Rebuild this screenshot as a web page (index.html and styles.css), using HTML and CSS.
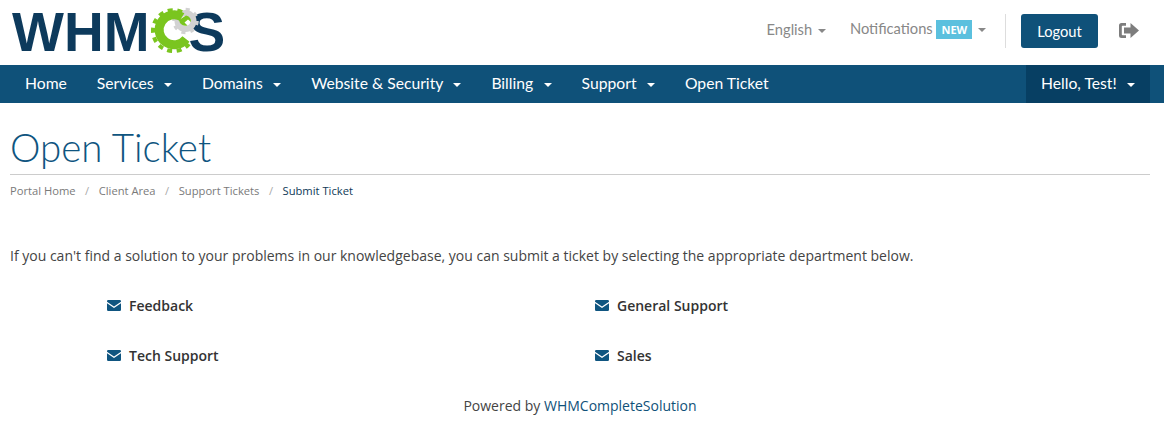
FILE: index.html
```html
<!DOCTYPE html>
<html lang="en">
<head>
    <meta charset="UTF-8">
    <meta name="viewport" content="width=device-width, initial-scale=1.0">
    <title>Open Ticket</title>
    <link rel="stylesheet" href="styles.css">
</head>
<body>
    <header class="top-bar">
        <a class="logo" href="#">
            <span class="logo-text">WHM</span>
            <svg class="logo-gears" viewBox="0 0 50 50" width="50" height="50">
                <g fill="none">
                    <circle cx="36.500" cy="15" r="8" stroke="#d2d2d2" stroke-width="6"/>
                    <circle cx="36.500" cy="15" r="11.500" stroke="#d2d2d2" stroke-width="3.500" stroke-dasharray="4 5"/>
                    <path d="M33 11A15 15 0 1 0 37 33" stroke="#7ac51f" stroke-width="9"/>
                    <path d="M33 6A20.500 20.500 0 1 0 40 38" stroke="#7ac51f" stroke-width="4" stroke-dasharray="5 4.500"/>
                </g>
                <path d="M30 14a6.500 6.500 0 0 0 8.500 5.500l-3-3 3.500-3 3 2.500a6.500 6.500 0 0 0-5-6.500z" fill="#7ac51f"/>
            </svg>
            <span class="logo-text">S</span>
        </a>
        <div class="top-actions">
            <a class="top-link" href="#">English <span class="caret"></span></a>
            <a class="top-link" href="#">Notifications <span class="badge">NEW</span> <span class="caret"></span></a>
            <div class="divider"></div>
            <a class="logout-btn" href="#">Logout</a>
            <svg class="logout-icon" viewBox="0 0 22 18" width="22" height="18">
                <path d="M8 1H3.500A2.500 2.500 0 0 0 1 3.500v10A2.500 2.500 0 0 0 3.500 16H8v-2.800H4.500a.7.7 0 0 1-.7-.7V4.500a.7.7 0 0 1 .7-.7H8z" fill="#7d7d7d"/>
                <path d="M6 5.500h6.500V1L21 8.500 12.500 16v-4.500H6z" fill="#7d7d7d"/>
            </svg>
        </div>
    </header>

    <nav class="main-nav">
        <ul class="nav-list">
            <li><a href="#">Home</a></li>
            <li><a href="#">Services <span class="caret"></span></a></li>
            <li><a href="#">Domains <span class="caret"></span></a></li>
            <li><a href="#">Website &amp; Security <span class="caret"></span></a></li>
            <li><a href="#">Billing <span class="caret"></span></a></li>
            <li><a href="#">Support <span class="caret"></span></a></li>
            <li><a href="#">Open Ticket</a></li>
        </ul>
        <a class="account-link" href="#">Hello, Test! <span class="caret"></span></a>
    </nav>

    <main class="content">
        <h1 class="page-title">Open Ticket</h1>
        <ol class="breadcrumb">
            <li><a href="#">Portal Home</a></li>
            <li><a href="#">Client Area</a></li>
            <li><a href="#">Support Tickets</a></li>
            <li class="active">Submit Ticket</li>
        </ol>

        <p class="intro">If you can't find a solution to your problems in our knowledgebase, you can submit a ticket by selecting the appropriate department below.</p>

        <div class="departments">
            <a class="department" href="#"><svg class="envelope" viewBox="0 0 14 11" width="14" height="11"><path d="M1.200 0h11.600A1.200 1.200 0 0 1 14 1.200v.5L7 6.400 0 1.700v-.5A1.200 1.200 0 0 1 1.200 0zM0 3.200l7 4.700 7-4.700v6.600A1.200 1.200 0 0 1 12.800 11H1.200A1.200 1.200 0 0 1 0 9.800z"/></svg>Feedback</a>
            <a class="department" href="#"><svg class="envelope" viewBox="0 0 14 11" width="14" height="11"><path d="M1.200 0h11.600A1.200 1.200 0 0 1 14 1.200v.5L7 6.400 0 1.700v-.5A1.200 1.200 0 0 1 1.200 0zM0 3.200l7 4.700 7-4.700v6.600A1.200 1.200 0 0 1 12.800 11H1.200A1.200 1.200 0 0 1 0 9.800z"/></svg>General Support</a>
            <a class="department" href="#"><svg class="envelope" viewBox="0 0 14 11" width="14" height="11"><path d="M1.200 0h11.600A1.200 1.200 0 0 1 14 1.200v.5L7 6.400 0 1.700v-.5A1.200 1.200 0 0 1 1.200 0zM0 3.200l7 4.700 7-4.700v6.600A1.200 1.200 0 0 1 12.800 11H1.200A1.200 1.200 0 0 1 0 9.800z"/></svg>Tech Support</a>
            <a class="department" href="#"><svg class="envelope" viewBox="0 0 14 11" width="14" height="11"><path d="M1.200 0h11.600A1.200 1.200 0 0 1 14 1.200v.5L7 6.400 0 1.700v-.5A1.200 1.200 0 0 1 1.200 0zM0 3.200l7 4.700 7-4.700v6.600A1.200 1.200 0 0 1 12.800 11H1.200A1.200 1.200 0 0 1 0 9.800z"/></svg>Sales</a>
        </div>

        <p class="powered">Powered by <a href="#">WHMCompleteSolution</a></p>
    </main>
</body>
</html>
```
FILE: styles.css
```css
body {
    margin: 0;
    background-color: #fff;
    color: #333;
    font-family: "Open Sans", sans-serif;
    font-size: 14px;
    overflow: hidden;
}
a {
    text-decoration: none;
    color: inherit;
}
ul, ol {
    list-style: none;
    margin: 0;
    padding: 0;
}
.caret {
    display: inline-block;
    width: 0;
    height: 0;
    margin-left: 2px;
    vertical-align: middle;
    border-top: 4px solid currentColor;
    border-left: 4px solid transparent;
    border-right: 4px solid transparent;
}

/* top bar */
.top-bar {
    height: 65px;
    display: flex;
    align-items: center;
    justify-content: space-between;
    padding: 0 24px 0 12px;
}
.logo {
    display: flex;
    align-items: center;
    height: 50px;
    margin-top: -2px;
}
.logo-text {
    font-family: "Liberation Sans", sans-serif;
    font-size: 55px;
    color: #0d3a5c;
    font-weight: bold;
    line-height: 50px;
}
.logo-gears {
    margin-left: 0;
    margin-right: -11px;
    margin-top: -2px;
    position: relative;
    z-index: 1;
}
.top-actions {
    display: flex;
    align-items: center;
    margin-top: -4px;
    font-family: Lato, sans-serif;
    font-size: 14.7px;
    color: #888;
}
.top-link {
    margin: -4px 24px 0 0;
}
.top-link .caret {
    margin-left: 2px;
}
.badge {
    display: inline-block;
    background-color: #5bc0de;
    color: #fff;
    font-family: "Open Sans", sans-serif;
    font-size: 11px;
    font-weight: 700;
    padding: 2px 5px;
    line-height: 15px;
}
.divider {
    width: 1px;
    height: 34px;
    background-color: #ddd;
    margin-right: 15px;
    margin-left: -5px;
}
.logout-btn {
    background-color: #0f5179;
    color: #fff;
    border-radius: 3px;
    width: 77px;
    height: 34px;
    line-height: 34px;
    text-align: center;
    margin-right: 20px;
}
.logout-icon {
    display: block;
}

/* main nav */
.main-nav {
    height: 38px;
    background-color: #0f5179;
    color: #fff;
    display: flex;
    justify-content: space-between;
    padding: 0 14px 0 10px;
    font-family: Lato, sans-serif;
    font-size: 15.7px;
    line-height: 37px;
}
.nav-list {
    display: flex;
}
.nav-list a {
    display: block;
    padding: 0 15px;
}
.main-nav .caret {
    margin-left: 6.4px;
}
.account-link {
    background-color: #073f63;
    padding: 0 15px;
    width: 94px;
    white-space: nowrap;
}

/* page */
.content {
    padding: 0 14px 0 10px;
}
.page-title {
    margin: 0;
    padding: 24px 0 6px;
    height: 41px;
    line-height: 41px;
    font-family: Lato, sans-serif;
    font-weight: 300;
    font-size: 38.500px;
    color: #0f5580;
    border-bottom: 1px solid #ccc;
}
.breadcrumb {
    display: flex;
    margin-top: 8px;
    font-size: 11.2px;
    line-height: 15px;
    color: #7a7a7a;
}
.breadcrumb li:not(:last-child)::after {
    content: "/";
    color: #aaa;
    padding: 0 9.500px;
}
.breadcrumb .active {
    color: #0f3a58;
}
.intro {
    margin: 48px 0 0;
    line-height: 20px;
    color: #444;
}
.departments {
    display: grid;
    grid-template-columns: 488px 488px;
    grid-auto-rows: 50px;
    padding: 29px 0 0 97px;
}
.department {
    display: flex;
    align-items: center;
    height: 20px;
    font-weight: 600;
    color: #333;
}
.envelope {
    margin-right: 8px;
    fill: #0f5580;
}
.powered {
    margin: 0;
    text-align: center;
    line-height: 20px;
    padding-top: 1px;
    color: #444;
}
.powered a {
    color: #0f5179;
}
```
